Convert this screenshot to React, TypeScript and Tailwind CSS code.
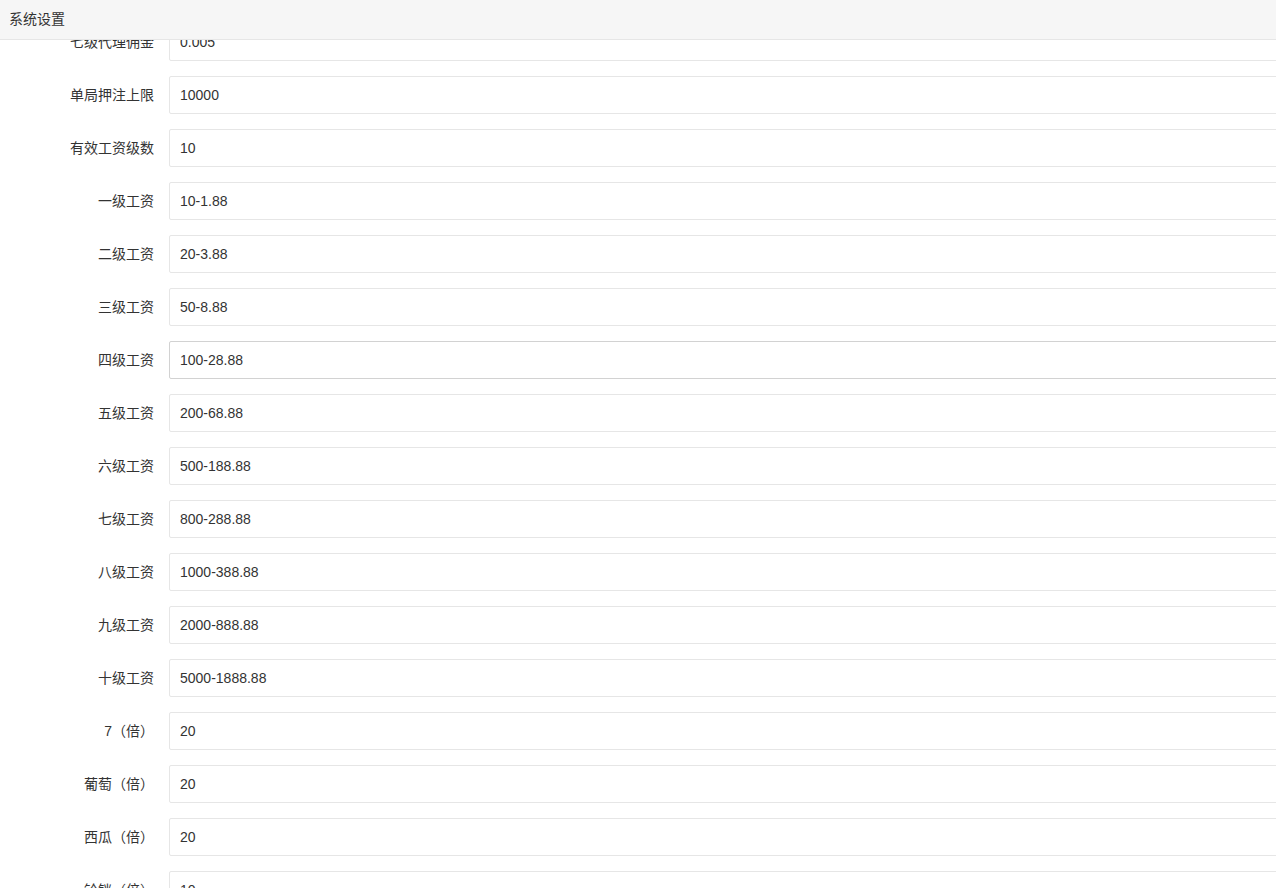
import React from "react";

const rows: [string, string][] = [
  ["七级代理佣金", "0.005"],
  ["单局押注上限", "10000"],
  ["有效工资级数", "10"],
  ["一级工资", "10-1.88"],
  ["二级工资", "20-3.88"],
  ["三级工资", "50-8.88"],
  ["四级工资", "100-28.88"],
  ["五级工资", "200-68.88"],
  ["六级工资", "500-188.88"],
  ["七级工资", "800-288.88"],
  ["八级工资", "1000-388.88"],
  ["九级工资", "2000-888.88"],
  ["十级工资", "5000-1888.88"],
  ["7（倍）", "20"],
  ["葡萄（倍）", "20"],
  ["西瓜（倍）", "20"],
  ["铃铛（倍）", "10"],
];

export default function App() {
  return (
    <div
      className="w-[1276px] h-[888px] overflow-hidden bg-white text-[#333] flex flex-col"
      style={{ fontFamily: '"Liberation Sans", "Noto Sans CJK SC", sans-serif' }}
    >
      <div className="h-[40px] shrink-0 bg-[#f6f6f6] border-b border-[#e6e6e6] flex items-center pl-[9px] text-[14px] relative z-10">
        系统设置
      </div>
      <div className="flex-1 overflow-hidden">
        <div className="-mt-[17px] flex flex-col gap-[15px]">
          {rows.map(([label, value], i) => (
            <div key={i} className="flex items-center h-[38px]">
              <div className="w-[169px] shrink-0 pr-[15px] text-right text-[14px] leading-[20px] whitespace-nowrap">
                {label}
              </div>
              <input
                readOnly
                value={value}
                className={`flex-1 -mr-[10px] h-[38px] rounded-[2px] border bg-white pl-[10px] text-[14px] text-[#333] outline-none ${
                  i === 6 ? "border-[#d2d2d2]" : "border-[#e6e6e6]"
                }`}
                style={{ fontFamily: '"Liberation Sans", "Noto Sans CJK SC", sans-serif' }}
              />
            </div>
          ))}
        </div>
      </div>
    </div>
  );
}
